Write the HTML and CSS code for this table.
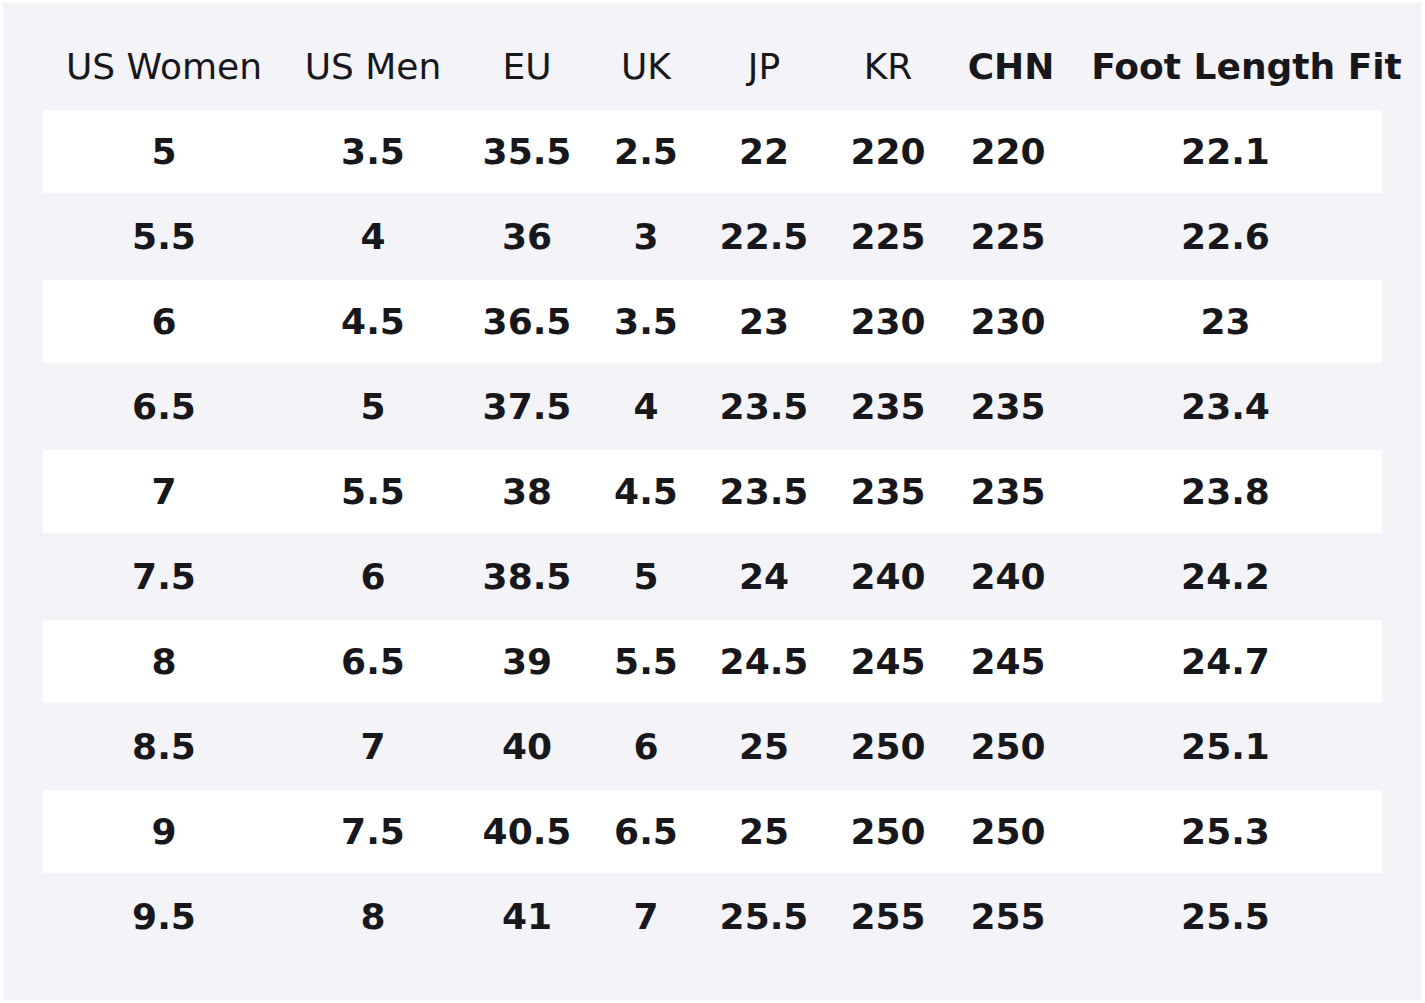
FILE: index.html
```html
<!DOCTYPE html>
<html lang="en">
<head>
<meta charset="utf-8">
<title>Size Chart</title>
<link rel="stylesheet" href="styles.css">
</head>
<body>
<div class="panel">
  <table class="chart">
    <colgroup>
      <col class="c1"><col class="c2"><col class="c3"><col class="c4"><col class="c5"><col class="c6"><col class="c7"><col class="c8">
    </colgroup>
    <thead>
      <tr>
        <th>US Women</th>
        <th>US Men</th>
        <th>EU</th>
        <th>UK</th>
        <th>JP</th>
        <th>KR</th>
        <th class="strong"><span class="nudge-s">CHN</span></th>
        <th class="strong"><span class="nudge-l">Foot Length Fit</span></th>
      </tr>
    </thead>
    <tbody>
      <tr><td>5</td><td>3.5</td><td>35.5</td><td>2.5</td><td>22</td><td>220</td><td>220</td><td>22.1</td></tr>
      <tr><td>5.5</td><td>4</td><td>36</td><td>3</td><td>22.5</td><td>225</td><td>225</td><td>22.6</td></tr>
      <tr><td>6</td><td>4.5</td><td>36.5</td><td>3.5</td><td>23</td><td>230</td><td>230</td><td>23</td></tr>
      <tr><td>6.5</td><td>5</td><td>37.5</td><td>4</td><td>23.5</td><td>235</td><td>235</td><td>23.4</td></tr>
      <tr><td>7</td><td>5.5</td><td>38</td><td>4.5</td><td>23.5</td><td>235</td><td>235</td><td>23.8</td></tr>
      <tr><td>7.5</td><td>6</td><td>38.5</td><td>5</td><td>24</td><td>240</td><td>240</td><td>24.2</td></tr>
      <tr><td>8</td><td>6.5</td><td>39</td><td>5.5</td><td>24.5</td><td>245</td><td>245</td><td>24.7</td></tr>
      <tr><td>8.5</td><td>7</td><td>40</td><td>6</td><td>25</td><td>250</td><td>250</td><td>25.1</td></tr>
      <tr><td>9</td><td>7.5</td><td>40.5</td><td>6.5</td><td>25</td><td>250</td><td>250</td><td>25.3</td></tr>
      <tr><td>9.5</td><td>8</td><td>41</td><td>7</td><td>25.5</td><td>255</td><td>255</td><td>25.5</td></tr>
    </tbody>
  </table>
</div>
</body>
</html>
```
FILE: styles.css
```css
html, body {
  margin: 0;
  padding: 0;
  background: #ffffff;
}
body {
  padding: 3px;
  font-family: "DejaVu Sans", "Liberation Sans", sans-serif;
  color: #17171c;
}
.panel {
  box-sizing: border-box;
  width: 1418px;
  height: 997px;
  background: #f3f3f8;
  padding: 20px 39px 0 40px;
}
.chart {
  width: 100%;
  table-layout: fixed;
  border-collapse: separate;
  border-spacing: 0 2px;
}
.c1 { width: 242px; }
.c2 { width: 176px; }
.c3 { width: 132px; }
.c4 { width: 106px; }
.c5 { width: 130px; }
.c6 { width: 118px; }
.c7 { width: 122px; }
.c8 { width: 313px; }
.chart th,
.chart td {
  height: 83px;
  padding: 0;
  text-align: center;
  vertical-align: middle;
  font-size: 36px;
  white-space: nowrap;
  overflow: visible;
}
.chart th {
  font-weight: normal;
}
.chart th.strong {
  font-weight: bold;
}
.chart td {
  font-weight: bold;
}
.chart tbody tr:nth-child(odd) td {
  background: #ffffff;
}
.nudge-s {
  display: inline-block;
  margin-left: 3px;
  margin-right: -3px;
}
.nudge-l {
  display: inline-block;
  margin-left: 21px;
  margin-right: -21px;
}
```
